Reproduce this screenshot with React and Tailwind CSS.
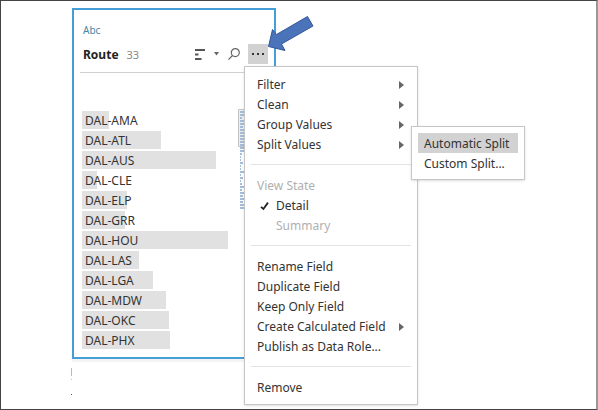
import React from "react";

const routes = [
  ["DAL-AMA", 27],
  ["DAL-ATL", 79],
  ["DAL-AUS", 134],
  ["DAL-CLE", 15],
  ["DAL-ELP", 45],
  ["DAL-GRR", 43],
  ["DAL-HOU", 146],
  ["DAL-LAS", 57],
  ["DAL-LGA", 71],
  ["DAL-MDW", 84],
  ["DAL-OKC", 87],
  ["DAL-PHX", 88],
];

const mapLines = [
  4, 4, 2, 4, 4, 3, 4, 4, 4, 4, 4, 4, 4, 4, 2, 1, 1, 3, 1, 1,
  4, 1, 3, 1, 2, 4, 2, 4, 3, 4, 3, 4, 4,
];

function MenuItem({ children, submenu, muted, indent, checked }) {
  return (
    <li className="relative" role="none">
      <button
        type="button"
        role="menuitem"
        aria-haspopup={submenu ? "menu" : undefined}
        disabled={muted}
        className={
          "flex h-5 w-full items-center whitespace-nowrap pr-[13px] pt-0.5 text-left " +
          (indent ? "pl-[15px] " : "pl-3 ") +
          (muted ? "text-[#b0b0b0]" : "text-[#333]")
        }
      >
        {indent && (
          <svg className="mr-[7px] h-[9px] w-[9px] shrink-0" viewBox="0 0 9 9">
            {checked && (
              <path d="M1 4.800 3.400 7 8 .6" fill="none" stroke="#222" strokeWidth="1.800" />
            )}
          </svg>
        )}
        <span className="flex-1">{children}</span>
        {submenu && (
          <svg className="h-2 w-[5px]" viewBox="0 0 5 8">
            <path d="M0 0 5 4 0 8z" fill="#666" />
          </svg>
        )}
      </button>
      {typeof submenu === "object" && submenu}
    </li>
  );
}

function Separator() {
  return <li role="separator" className="mx-1.5 my-2.5 h-px bg-[#e3e3e3]" />;
}

function SplitMenu() {
  return (
    <ul
      role="menu"
      className="absolute -top-2 left-[166px] z-10 w-[114px] border border-[#c6c6c6] bg-white p-1.5 text-[#333] shadow-sm"
    >
      <li role="none">
        <button type="button" role="menuitem" className="flex h-5 w-full items-center whitespace-nowrap bg-[#d2d2d2] pl-1.5 pt-0.5">
          Automatic Split
        </button>
      </li>
      <li role="none">
        <button type="button" role="menuitem" className="flex h-5 w-full items-center whitespace-nowrap pl-1.5 pt-0.5">
          Custom Split...
        </button>
      </li>
    </ul>
  );
}

function FieldMenu() {
  return (
    <ul
      role="menu"
      className="absolute -left-1 top-[22px] z-10 w-[174px] border border-[#c6c6c6] bg-white py-[7px] text-xs shadow-sm"
    >
      <MenuItem submenu>Filter</MenuItem>
      <MenuItem submenu>Clean</MenuItem>
      <MenuItem submenu>Group Values</MenuItem>
      <MenuItem submenu={<SplitMenu />}>Split Values</MenuItem>
      <Separator />
      <MenuItem muted>View State</MenuItem>
      <MenuItem indent checked>Detail</MenuItem>
      <MenuItem indent muted>Summary</MenuItem>
      <Separator />
      <MenuItem>Rename Field</MenuItem>
      <MenuItem>Duplicate Field</MenuItem>
      <MenuItem>Keep Only Field</MenuItem>
      <MenuItem submenu>Create Calculated Field</MenuItem>
      <MenuItem>Publish as Data Role...</MenuItem>
      <Separator />
      <MenuItem>Remove</MenuItem>
    </ul>
  );
}

function Pointer() {
  return (
    <svg className="pointer-events-none absolute -top-8 left-[19px] z-20 h-10 w-12" viewBox="0 0 48 40">
      <path
        d="M1.500 34.500 5.500 17.500 9.500 22.500 40.500 4.500 46 14 14.500 32 18 38.500z"
        fill="#4a73b9"
        stroke="#34589a"
      />
    </svg>
  );
}

function RouteCard() {
  return (
    <section className="w-[204px] border-2 border-[#459ed7] bg-white pb-2 shadow-[0_3px_0_#f4f4f4]">
      <header className="mx-1.5 border-b border-[#d0d0d0] pb-2 pl-[3px] pt-3">
        <div className="h-4 text-[10px] leading-4 text-[#3d88a6]">Abc</div>
        <div className="mt-1.5 flex h-5 items-center">
          <h1 className="pt-0.5 text-xs font-bold text-[#222]">Route</h1>
          <span className="ml-2 pt-0.5 text-[11px] text-[#888]">33</span>
          <div className="ml-auto flex items-center">
            <button type="button" aria-label="Sort" className="flex items-center gap-2">
              <svg className="h-[11px] w-[11px]" viewBox="0 0 11 11">
                <path d="M0 1h10M0 5.500h3.500M0 10h6.500" stroke="#555" strokeWidth="2" />
              </svg>
              <svg className="h-1 w-[5px]" viewBox="0 0 5 4">
                <path d="M0 0h5L2.500 3.500z" fill="#666" />
              </svg>
            </button>
            <button type="button" aria-label="Search" className="ml-[9px] mr-2">
              <svg className="h-3 w-3" viewBox="0 0 12 12" fill="none" stroke="#666" strokeWidth="1.200">
                <circle cx="7.300" cy="4.600" r="4" />
                <path d="M4.500 7.500.4 11.600" />
              </svg>
            </button>
            <div className="relative">
              <button type="button" aria-label="More options" className="flex h-5 w-5 items-center justify-center gap-[3px] bg-[#d2d2d2]">
                <i className="h-0.5 w-0.5 bg-[#333]" />
                <i className="h-0.5 w-0.5 bg-[#333]" />
                <i className="h-0.5 w-0.5 bg-[#333]" />
              </button>
              <Pointer />
              <FieldMenu />
            </div>
          </div>
        </div>
      </header>
      <div className="mt-[36px] flex pl-2">
        <ul className="flex w-[156px] flex-col gap-0.5 pt-0.5 text-xs text-[#333]">
          {routes.map(([name, width]) => (
            <li key={name} className="grid h-[18px] items-center">
              <span className="col-start-1 row-start-1 h-full bg-[#e1e1e1]" style={{ width }} />
              <span className="col-start-1 row-start-1 pl-[3px] pt-0.5 leading-4">{name}</span>
            </li>
          ))}
        </ul>
        <svg className="h-[102px] w-2" viewBox="0 0 8 102">
          <path d="M8 .5H.5v37H8" fill="#eee" stroke="#c4c4c4" />
          {mapLines.map((w, i) => (
            <path key={i} d={`M2 ${3 + i * 3}h${w}`} stroke="#a3bcda" strokeWidth="2" />
          ))}
        </svg>
      </div>
    </section>
  );
}

export default function App() {
  return (
    <main className="relative border border-r-2 border-[#444] border-r-[#999] bg-white pb-[50px] pl-[71px] pt-[7px] font-['Noto_Sans','Open_Sans',sans-serif]">
      <RouteCard />
      <svg className="absolute left-[70px] top-[366px] h-[30px] w-px" viewBox="0 0 1 30">
        <path d="M0 1h1v8H0zM0 12h1v1H0z" fill="#bbb" />
        <path d="M0 27h1v1H0z" fill="#843" />
      </svg>
      <svg className="absolute left-[255px] top-[403px] h-px w-[70px]" viewBox="0 0 70 1">
        <path d="M0 0h70v1H0z" fill="#bbb" />
        <path d="M0 0h2v1H0zM67 0h2v1h-2z" fill="#459ed7" />
      </svg>
    </main>
  );
}
